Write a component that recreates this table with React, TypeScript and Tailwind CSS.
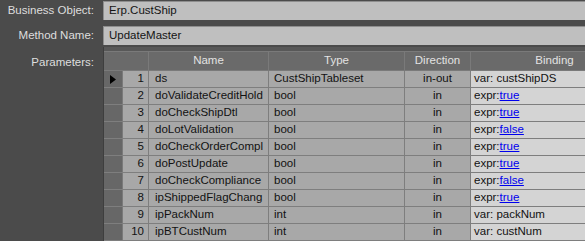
import React from "react";

type Param = {
  name: string;
  type: string;
  dir: string;
  kind: "var" | "expr";
  value: string;
};

const params: Param[] = [
  { name: "ds", type: "CustShipTableset", dir: "in-out", kind: "var", value: "custShipDS" },
  { name: "doValidateCreditHold", type: "bool", dir: "in", kind: "expr", value: "true" },
  { name: "doCheckShipDtl", type: "bool", dir: "in", kind: "expr", value: "true" },
  { name: "doLotValidation", type: "bool", dir: "in", kind: "expr", value: "false" },
  { name: "doCheckOrderCompl", type: "bool", dir: "in", kind: "expr", value: "true" },
  { name: "doPostUpdate", type: "bool", dir: "in", kind: "expr", value: "true" },
  { name: "doCheckCompliance", type: "bool", dir: "in", kind: "expr", value: "false" },
  { name: "ipShippedFlagChang", type: "bool", dir: "in", kind: "expr", value: "true" },
  { name: "ipPackNum", type: "int", dir: "in", kind: "var", value: "packNum" },
  { name: "ipBTCustNum", type: "int", dir: "in", kind: "var", value: "custNum" },
];

function Field({ label, value }: { label: string; value: string }) {
  return (
    <div className="flex h-[19px] items-center">
      <div className="w-[103px] shrink-0 pr-[9px] text-right text-[#dedede]">{label}</div>
      <div className="flex h-full flex-1 items-center border-l border-t border-[#8e8e8e] bg-[#bfbfbf] pl-[5px] text-[#141414]">
        {value}
      </div>
    </div>
  );
}

export default function App() {
  return (
    <div className="h-[241px] w-[585px] overflow-hidden bg-[#4b4b4b] font-['Liberation_Sans',Arial,sans-serif] text-[11.5px] leading-none">
      <div className="flex flex-col gap-[6px] pt-[1px]">
        <Field label="Business Object:" value="Erp.CustShip" />
        <Field label="Method Name:" value="UpdateMaster" />
      </div>

      <div className="mt-[2px] flex">
        <div className="w-[103px] shrink-0 pr-[9px] pt-[10px] text-right text-[#dedede]">Parameters:</div>
        <div className="flex-1 overflow-hidden border-l border-[#3e3e3e] bg-[#585858] pt-[4px]">
          <div className="w-[700px]">
            {/* column headers */}
            <div className="flex h-[20px] border-y border-[#7a7a7a] bg-[#6a6a6a] text-[#e2e2e2]">
              <div className="w-[45px] border-r border-[#7a7a7a]" />
              <div className="flex w-[120px] items-center justify-center border-r border-[#7a7a7a]">Name</div>
              <div className="flex w-[136px] items-center justify-center border-r border-[#7a7a7a]">Type</div>
              <div className="flex w-[66px] items-center justify-center border-r border-[#7a7a7a]">Direction</div>
              <div className="flex w-[168px] items-center justify-center border-r border-[#7a7a7a]">Binding</div>
            </div>

            {/* parameter rows */}
            {params.map((p, i) => (
              <div key={p.name} className="flex h-[17px] border-b border-[#7e7e7e] text-[#121212]">
                <div className="flex w-[19px] items-center justify-center border-r border-[#7a7a7a] bg-[#676767]">
                  {i === 0 && (
                    <svg width="6" height="9" viewBox="0 0 6 9">
                      <path d="M0 0 L6 4.5 L0 9 Z" fill="#000" />
                    </svg>
                  )}
                </div>
                <div className="flex w-[26px] items-center justify-end border-r border-[#7e7e7e] bg-[#a8a8a8] pr-[4px]">
                  {i + 1}
                </div>
                <div className="flex w-[120px] items-center overflow-hidden whitespace-nowrap border-r border-[#7e7e7e] bg-[#a8a8a8] pl-[6px]">
                  {p.name}
                </div>
                <div className="flex w-[136px] items-center border-r border-[#7e7e7e] bg-[#a8a8a8] pl-[5px]">
                  {p.type}
                </div>
                <div className="flex w-[66px] items-center justify-center border-r border-[#7e7e7e] bg-[#a8a8a8]">
                  {p.dir}
                </div>
                <div className="flex w-[168px] items-center bg-[#d4d4d4] pl-[3px]">
                  {p.kind === "var" ? (
                    <span>var: {p.value}</span>
                  ) : (
                    <span>
                      expr:<span className="text-[#0000ee] underline">{p.value}</span>
                    </span>
                  )}
                </div>
              </div>
            ))}
          </div>
        </div>
      </div>
    </div>
  );
}
